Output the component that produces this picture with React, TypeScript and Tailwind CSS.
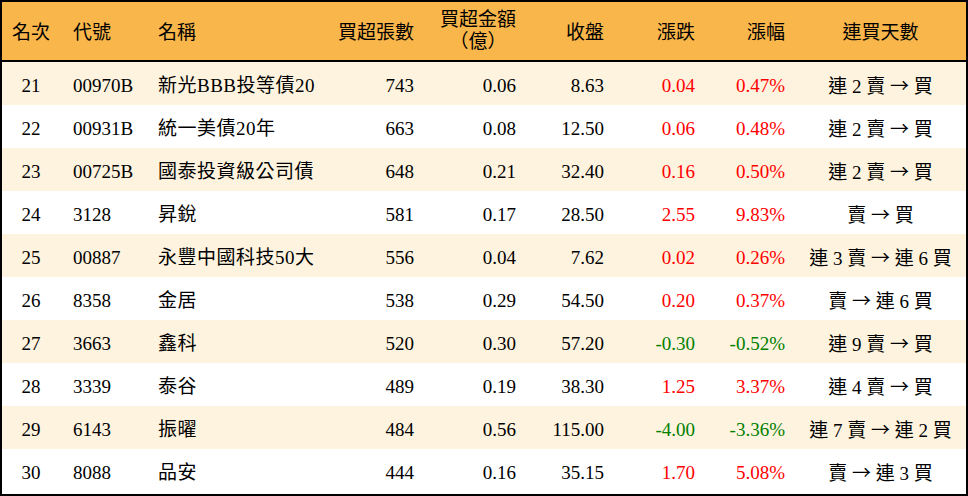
const rows = [
  { rank: 21, code: "00970B", name: "新光BBB投等債20", vol: "743", amt: "0.06", close: "8.63", chg: "0.04", pct: "0.47%", days: ["連 2 賣", "買"] },
  { rank: 22, code: "00931B", name: "統一美債20年", vol: "663", amt: "0.08", close: "12.50", chg: "0.06", pct: "0.48%", days: ["連 2 賣", "買"] },
  { rank: 23, code: "00725B", name: "國泰投資級公司債", vol: "648", amt: "0.21", close: "32.40", chg: "0.16", pct: "0.50%", days: ["連 2 賣", "買"] },
  { rank: 24, code: "3128", name: "昇銳", vol: "581", amt: "0.17", close: "28.50", chg: "2.55", pct: "9.83%", days: ["賣", "買"] },
  { rank: 25, code: "00887", name: "永豐中國科技50大", vol: "556", amt: "0.04", close: "7.62", chg: "0.02", pct: "0.26%", days: ["連 3 賣", "連 6 買"] },
  { rank: 26, code: "8358", name: "金居", vol: "538", amt: "0.29", close: "54.50", chg: "0.20", pct: "0.37%", days: ["賣", "連 6 買"] },
  { rank: 27, code: "3663", name: "鑫科", vol: "520", amt: "0.30", close: "57.20", chg: "-0.30", pct: "-0.52%", days: ["連 9 賣", "買"] },
  { rank: 28, code: "3339", name: "泰谷", vol: "489", amt: "0.19", close: "38.30", chg: "1.25", pct: "3.37%", days: ["連 4 賣", "買"] },
  { rank: 29, code: "6143", name: "振曜", vol: "484", amt: "0.56", close: "115.00", chg: "-4.00", pct: "-3.36%", days: ["連 7 賣", "連 2 買"] },
  { rank: 30, code: "8088", name: "品安", vol: "444", amt: "0.16", close: "35.15", chg: "1.70", pct: "5.08%", days: ["賣", "連 3 買"] },
];

export default function App() {
  return (
    <div
      className="w-[968px] h-[496px] bg-white border-2 border-black text-black text-[19px]"
      style={{ fontFamily: '"Liberation Serif", "Noto Sans CJK TC", serif' }}
    >
      <div className="flex h-[60px] pt-[4px] items-center bg-[#f9b64b] border-b-2 border-black">
        <div className="w-[58px] text-center">名次</div>
        <div className="w-[85px] pl-[13px]">代號</div>
        <div className="w-[185px] pl-[13px]">名稱</div>
        <div className="w-[94px] pr-[10px] text-right">買超張數</div>
        <div className="w-[102px] pr-[10px] text-right">
          <div className="inline-block text-center leading-[22px]">
            買超金額
            <br />
            （億）
          </div>
        </div>
        <div className="w-[88px] pr-[10px] text-right">收盤</div>
        <div className="w-[91px] pr-[10px] text-right">漲跌</div>
        <div className="w-[90px] pr-[10px] text-right">漲幅</div>
        <div className="flex-1 text-center">連買天數</div>
      </div>
      {rows.map((r, i) => {
        const color = r.chg.startsWith("-") ? "text-[#008000]" : "text-[#ff0000]";
        return (
          <div
            key={r.rank}
            className={`flex h-[43px] pt-[5px] items-center ${i % 2 === 0 ? "bg-[#fef3de]" : "bg-white"}`}
          >
            <div className="w-[58px] text-center">{r.rank}</div>
            <div className="w-[85px] pl-[13px]">{r.code}</div>
            <div className="w-[185px] pl-[13px] whitespace-nowrap tracking-[0.5px]">{r.name}</div>
            <div className="w-[94px] pr-[10px] text-right">{r.vol}</div>
            <div className="w-[102px] pr-[10px] text-right">{r.amt}</div>
            <div className="w-[88px] pr-[10px] text-right">{r.close}</div>
            <div className={`w-[91px] pr-[10px] text-right ${color}`}>{r.chg}</div>
            <div className={`w-[90px] pr-[10px] text-right ${color}`}>{r.pct}</div>
            <div className="flex-1 text-center whitespace-nowrap">
              {r.days[0]}{" "}
              <span style={{ fontFamily: '"Noto Sans CJK TC", sans-serif' }}>→</span>{" "}
              {r.days[1]}
            </div>
          </div>
        );
      })}
    </div>
  );
}
